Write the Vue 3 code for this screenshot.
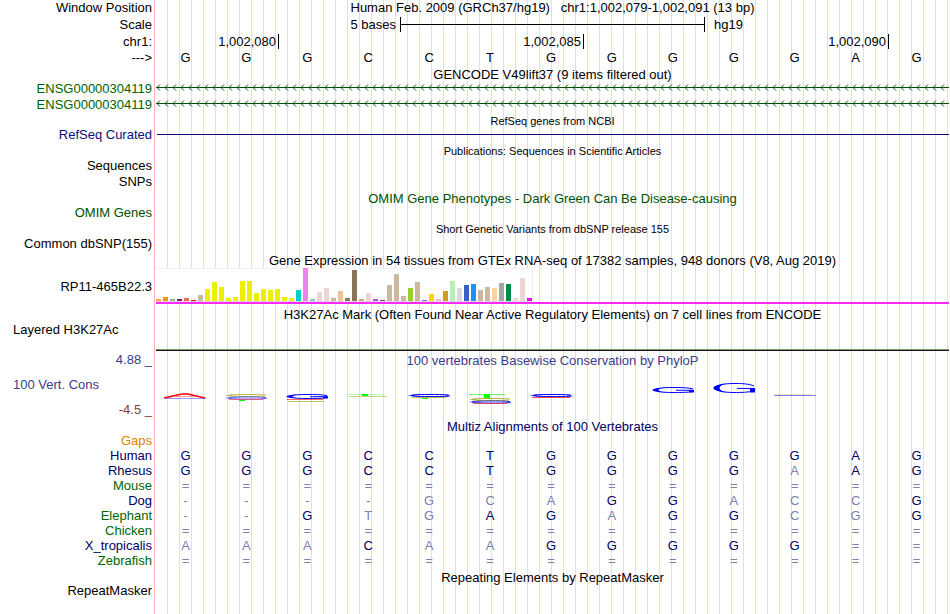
<template>
  <main class="browser">
    <div class="row h15">
      <span class="label">Window Position</span>
      <h1 class="title">Human Feb. 2009 (GRCh37/hg19) &nbsp; chr1:1,002,079-1,002,091 (13 bp)</h1>
    </div>
    <div class="row h18">
      <span class="label">Scale</span>
      <div class="scale">
        <span class="scale-left">5 bases</span>
        <span class="scale-bar"></span>
        <span class="scale-right">hg19</span>
      </div>
    </div>
    <div class="row h17">
      <span class="label">chr1:</span>
      <div class="ruler">
        <span class="tick first">1,002,080</span>
        <span class="tick">1,002,085</span>
        <span class="tick">1,002,090</span>
      </div>
    </div>
    <div class="row h15">
      <span class="label">---&gt;</span>
      <div class="bases">
        <span v-for="(base, i) in sequence" :key="i">{{ base }}</span>
      </div>
    </div>

    <h2 class="title track-title h15">GENCODE V49lift37 (9 items filtered out)</h2>
    <div v-for="n in 2" :key="n" class="row h16">
      <a class="label green" href="#gencode">ENSG00000304119</a>
      <svg class="transcript" height="8">
        <defs>
          <pattern :id="'strand' + n" width="8" height="8" patternUnits="userSpaceOnUse">
            <path d="M0 3.5H8" stroke="#005000" />
            <path d="M4 .5L1 3.5L4 6.5" fill="none" stroke="#005000" />
          </pattern>
        </defs>
        <rect width="100%" height="8" :fill="`url(#strand${n})`" />
      </svg>
    </div>

    <h2 class="title track-title small h15">RefSeq genes from NCBI</h2>
    <div class="row h15">
      <a class="label navy" href="#refseq">RefSeq Curated</a>
      <div class="gene-line"></div>
    </div>

    <h2 class="title track-title small h15">Publications: Sequences in Scientific Articles</h2>
    <div class="row h16"><a class="label" href="#sequences">Sequences</a></div>
    <div class="row h16"><a class="label" href="#snps">SNPs</a></div>

    <h2 class="title track-title omim h16">OMIM Gene Phenotypes - Dark Green Can Be Disease-causing</h2>
    <div class="row h15"><a class="label omim" href="#omim">OMIM Genes</a></div>

    <h2 class="title track-title small h15">Short Genetic Variants from dbSNP release 155</h2>
    <div class="row h16"><a class="label" href="#dbsnp">Common dbSNP(155)</a></div>

    <h2 class="title track-title h17">Gene Expression in 54 tissues from GTEx RNA-seq of 17382 samples, 948 donors (V8, Aug 2019)</h2>
    <div class="row">
      <a class="label" href="#gtex">RP11-465B22.3</a>
      <div class="gtex">
        <div class="bars">
          <span
            v-for="(tissue, i) in tissues"
            :key="i"
            :style="{ height: tissue[0] + 'px', background: tissue[1] }"
          ></span>
        </div>
      </div>
    </div>

    <h2 class="title track-title h18">H3K27Ac Mark (Often Found Near Active Regulatory Elements) on 7 cell lines from ENCODE</h2>
    <div class="row histone">
      <a class="label left" href="#h3k27ac">Layered H3K27Ac</a>
      <div class="histone-line"></div>
    </div>

    <div class="row conservation">
      <div class="axis">
        <span class="upper">4.88 _</span>
        <a class="left upper" href="#cons">100 Vert. Cons</a>
        <span class="lower">-4.5 _</span>
      </div>
      <div class="phylop">
        <h2 class="title upper">100 vertebrates Basewise Conservation by PhyloP</h2>
        <div class="logos">
          <svg v-for="(marks, i) in logos" :key="i" viewBox="1 0 61 30" preserveAspectRatio="none">
            <template v-for="(m, j) in marks" :key="j">
              <polyline
                v-if="m.kind === 'peak'"
                :points="`10,${m.y + m.h} 28,${m.y} 34,${m.y} 51,${m.y + m.h}`"
                fill="none"
                :stroke="m.color"
                stroke-width="1.4"
              />
              <rect
                v-else-if="m.kind === 'block'"
                :x="m.x"
                :y="m.y"
                :width="m.w"
                :height="m.h"
                :fill="m.color"
                :opacity="m.opacity"
              />
              <g v-else :stroke="m.color" :fill="m.color" :opacity="m.opacity">
                <path :d="arc(m)" fill="none" />
                <path :d="crescent(m)" stroke="none" />
                <template v-if="m.kind === 'hook'">
                  <path v-if="m.h > 3" :d="`M34 ${m.y + m.h * 0.55}H52`" />
                  <rect x="47" :y="m.y + m.h * 0.55" width="5" :height="m.h * 0.45" stroke="none" />
                </template>
              </g>
            </template>
          </svg>
        </div>
      </div>
    </div>

    <h2 class="title track-title multiz h16">Multiz Alignments of 100 Vertebrates</h2>
    <div class="row h15"><span class="label gaps">Gaps</span></div>
    <div v-for="s in species" :key="s.name" class="row h15">
      <span class="label" :class="s.tone">{{ s.name }}</span>
      <div class="bases aligned">
        <span v-for="(base, i) in s.bases" :key="i" :class="{ faded: s.faded[i] === 'x' }">{{ base }}</span>
      </div>
    </div>

    <h2 class="title track-title h15">Repeating Elements by RepeatMasker</h2>
    <div class="row h15"><a class="label" href="#rmsk">RepeatMasker</a></div>
  </main>
</template>

<script setup>
const sequence = "GGGCCTGGGGGAG";

const species = [
  { name: "Human", tone: "dark", bases: "GGGCCTGGGGGAG", faded: "............." },
  { name: "Rhesus", tone: "dark", bases: "GGGCCTGGGGAAG", faded: "..........x.." },
  { name: "Mouse", tone: "green", bases: "=============", faded: "xxxxxxxxxxxxx" },
  { name: "Dog", tone: "dark", bases: "----GCAGGACCG", faded: "xxxxxxx..xxx." },
  { name: "Elephant", tone: "green", bases: "--GTGAGAGGCGG", faded: "xx.xx..x..xx." },
  { name: "Chicken", tone: "green", bases: "=============", faded: "xxxxxxxxxxxxx" },
  { name: "X_tropicalis", tone: "dark", bases: "AAACAAGGGGG==", faded: "xxx.xx.....xx" },
  { name: "Zebrafish", tone: "green", bases: "=============", faded: "xxxxxxxxxxxxx" },
];

// [bar height, tissue color]
const tissues = [
  [2, "#ffa54f"], [4, "#ee9a00"], [2, "#8fbc8f"], [2, "#8b1c62"], [3, "#ee6a50"],
  [1, "#ff0000"], [6, "#cdb79e"], [12, "#eeee00"], [19, "#eeee00"], [14, "#eeee00"],
  [3, "#eeee00"], [4, "#eeee00"], [20, "#eeee00"], [20, "#eeee00"], [8, "#eeee00"],
  [12, "#eeee00"], [11, "#eeee00"], [12, "#eeee00"], [4, "#eeee00"], [3, "#eeee00"],
  [11, "#00cdcd"], [33, "#ee82ee"], [2, "#9ac0cd"], [9, "#eed5d2"], [13, "#eed5d2"],
  [3, "#cdb79e"], [10, "#eec591"], [3, "#8b7355"], [31, "#8b7355"], [2, "#cdaa7d"],
  [8, "#eed5d2"], [2, "#b452cd"], [1, "#7a378b"], [16, "#cdb79e"], [27, "#cdb79e"],
  [5, "#cdb79e"], [13, "#9acd32"], [19, "#cdb79e"], [1, "#7a67ee"], [7, "#ffd700"],
  [2, "#ffb6c1"], [10, "#cd9b1d"], [20, "#b4eeb4"], [13, "#d9d9d9"], [16, "#3a5fcd"],
  [17, "#1e90ff"], [11, "#cdb79e"], [14, "#cdb79e"], [13, "#ffd39b"], [18, "#a6a6a6"],
  [17, "#008b45"], [3, "#eed5d2"], [23, "#eed5d2"], [3, "#ff00ff"],
];

const RED = "#ff0000";
const BLUE = "#0000ff";
const OLIVE = "#a0a000";
const GREEN = "#00ff00";

const block = (x, y, w, h, color, opacity = 1) => ({ kind: "block", x, y, w, h, color, opacity });
const ring = (y, h, color, opacity = 1) => ({ kind: "ring", y, h, color, opacity });
const hook = (y, h, color, opacity = 1) => ({ kind: "hook", y, h, color, opacity });

const arc = ({ y, h }) =>
  `M51 ${y + h * 0.28}C46 ${y} 38 ${y} 31 ${y}C7 ${y} 7 ${y + h} 31 ${y + h}C38 ${y + h} 46 ${y + h} 50 ${y + h * 0.8}`;

const crescent = ({ y, h }) =>
  `M24 ${y}C6 ${y + h * 0.15} 6 ${y + h * 0.85} 24 ${y + h}C14 ${y + h * 0.8} 14 ${y + h * 0.2} 24 ${y}Z`;

// stacked marks per base, y counted from the top of the plot
const logos = [
  [{ kind: "peak", y: 13, h: 4, color: RED }, block(11, 17, 41, 1, BLUE, 0.4), block(22, 15, 18, 1, RED, 0.4)],
  [ring(13.5, 2, OLIVE, 0.7), hook(16, 2, BLUE, 0.6), block(14, 18, 34, 1, RED, 0.5), block(24, 19, 6, 1, GREEN)],
  [hook(13.5, 4, BLUE), block(11, 18, 36, 1, RED, 0.6), block(12, 20, 36, 1, OLIVE, 0.6)],
  [block(10, 13, 36, 1, GREEN, 0.3), block(25, 13, 6, 2, GREEN), block(12, 15, 38, 1, OLIVE, 0.5)],
  [hook(13.5, 2, BLUE), block(14, 16, 34, 1, OLIVE, 0.7), block(24, 17, 6, 1, GREEN)],
  [block(10, 13, 36, 1, GREEN, 0.6), ring(17.5, 2, OLIVE, 0.8), hook(20, 2, BLUE, 0.8), block(14, 22, 34, 1, RED, 0.6), block(25, 13, 6, 4, GREEN)],
  [hook(13.5, 2, BLUE), block(12, 16, 38, 1, RED, 0.7)],
  [],
  [hook(6.5, 5, BLUE)],
  [hook(2.5, 9, BLUE)],
  [block(11, 13, 36, 1, OLIVE, 0.3), block(10, 14, 42, 1, BLUE, 0.5)],
  [],
  [],
];
</script>

<style>
body {
  margin: 0;
  background: #fff;
}
</style>

<style scoped>
.browser {
  min-height: 100vh;
  box-sizing: border-box;
  font: 13px/15px "Liberation Sans", Arial, sans-serif;
  color: #000;
  background:
    linear-gradient(#ffb0b0, #ffb0b0) 154px 0 / 1px 100% no-repeat,
    repeating-linear-gradient(to right, transparent 0 11px, #dcdcff 11px 12px) 156px 0 no-repeat;
}

.row,
.track-title {
  display: grid;
  grid-template-columns: 155px minmax(0, 1fr);
  align-items: center;
}

.track-title {
  box-sizing: border-box;
  grid-template-columns: minmax(0, 1fr);
  padding: 2px 0 0 155px;
}

.h15 { height: 15px; }
.h16 { height: 16px; }
.h17 { height: 17px; }
.h18 { height: 18px; }

.label {
  padding-right: 3px;
  text-align: right;
  white-space: nowrap;
}

.title {
  margin: 0;
  font-size: 13px;
  font-weight: normal;
  text-align: center;
  white-space: nowrap;
}

.title.small {
  font-size: 11px;
}

a {
  color: inherit;
  text-decoration: none;
}

.green { color: #006400; }
.navy { color: #0c0c78; }
.dark { color: #000064; }
.omim { color: #005000; }
.multiz { color: #000064; }
.gaps { color: #e68200; }
.upper { color: #3c3c8c; }
.lower { color: #8c3c3c; }

.scale,
.ruler,
.bases,
.logos {
  display: grid;
  grid-template-columns: repeat(13, minmax(0, 1fr));
}

.scale {
  padding: 0 1px;
  align-items: center;
}

.scale-left {
  grid-column: span 4;
  padding-right: 4px;
  text-align: right;
}

.scale-bar {
  grid-column: span 5;
  height: 15px;
  border: solid #000;
  border-width: 0 1px;
  background: linear-gradient(#000, #000) center / 100% 1px no-repeat;
}

.scale-right {
  grid-column: span 4;
  padding-left: 9px;
}

.ruler {
  padding-left: 2px;
}

.tick {
  grid-column: span 5;
  padding-right: 2px;
  border-right: 1px solid #000;
  text-align: right;
}

.tick.first {
  grid-column: span 2;
}

.bases {
  padding-right: 3px;
  text-align: center;
}

.aligned {
  color: #000064;
}

.faded {
  color: #8080b0;
}

.transcript {
  display: block;
  width: calc(100% - 2px);
  margin-left: 1px;
}

.gene-line {
  height: 1px;
  margin: 0 1px 0 2px;
  background: #0c0c78;
}

.gtex {
  margin: 0 1px;
  border-bottom: 2px solid #ff28ff;
}

.bars {
  display: flex;
  align-items: flex-end;
  gap: 2px;
  width: max-content;
  height: 33px;
  border-right: 1px solid #f0f0f0;
  border-bottom: 1px solid #dcdcdc;
  background: linear-gradient(#f0f0f0, #f0f0f0) top / 100% 1px no-repeat #fff;
}

.bars span {
  width: 5px;
}

.histone {
  height: 29px;
}

.histone .label {
  align-self: start;
}

.label.left,
.axis .left {
  padding-left: 13px;
  text-align: left;
}

.histone-line {
  align-self: end;
  height: 1px;
  margin: 0 1px;
  border-top: 1px solid #6aa84f;
  background: #280a32;
}

.conservation {
  height: 66px;
  align-items: stretch;
}

.axis {
  display: flex;
  flex-direction: column;
  justify-content: space-between;
  padding: 1px 3px 0 0;
  text-align: right;
}

.phylop .title {
  line-height: 20px;
}

.logos {
  padding: 10px 2px 0 0;
}

.logos svg {
  width: 100%;
  height: 30px;
}
</style>
